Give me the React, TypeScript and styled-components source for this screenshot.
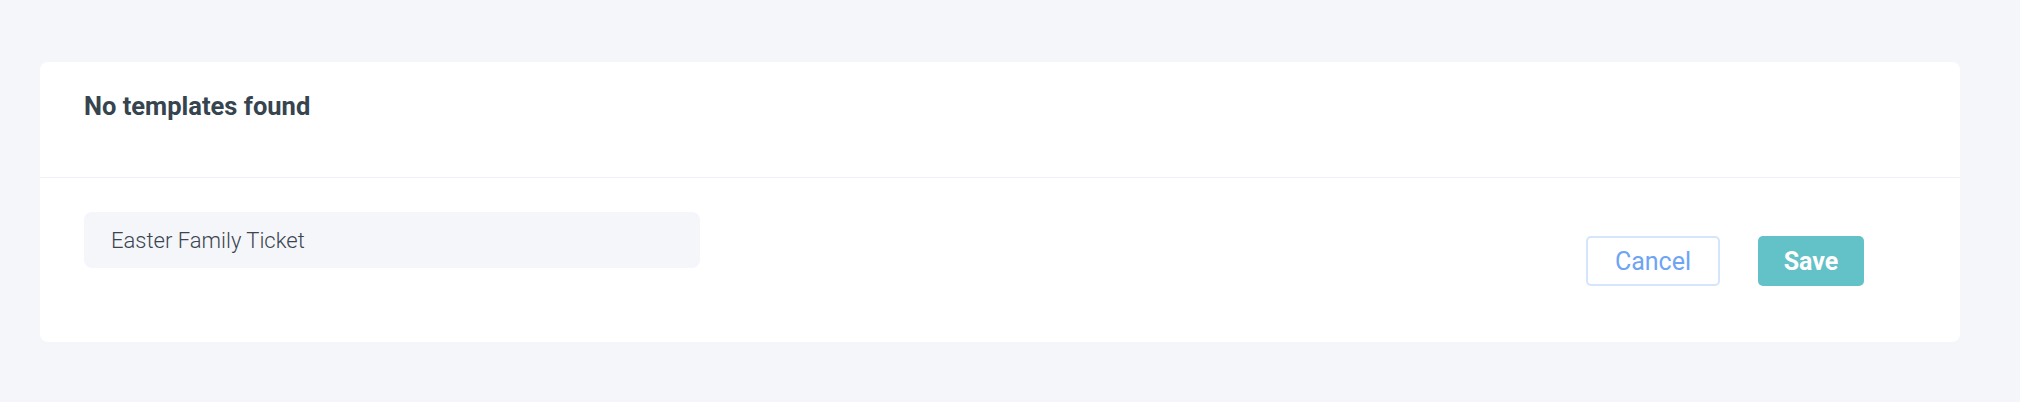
import React from "react";
import styled, { createGlobalStyle } from "styled-components";

const Global = createGlobalStyle`
  html, body { margin: 0; padding: 0; background: #f5f6fa; }
  body { font-family: Roboto, "Noto Sans", sans-serif; }
`;

const Page = styled.div`
  padding: 62px 60px 60px 40px;
`;

const Card = styled.div`
  background: #ffffff;
  border-radius: 8px;
  display: flex;
  flex-direction: column;
`;

const Header = styled.div`
  height: 116px;
  box-sizing: border-box;
  padding: 24px 44px 0;
  border-bottom: 1px solid #eff1f6;
`;

const Title = styled.h2`
  margin: 0;
  font-size: 25.5px;
  font-weight: 700;
  color: #36444f;
  line-height: 40px;
`;

const Body = styled.div`
  display: flex;
  align-items: flex-start;
  padding: 34px 96px 56px 44px;
`;

const NameField = styled.div`
  width: 616px;
  height: 56px;
  box-sizing: border-box;
  border-radius: 8px;
  background: #f5f6fa;
  display: flex;
  align-items: center;
  padding: 0 27px;
  font-size: 22px;
  font-weight: 300;
  color: #3b4550;
`;

const Actions = styled.div`
  margin-left: auto;
  margin-top: 24px;
  display: flex;
  gap: 38px;
`;

const Button = styled.button<{ $primary?: boolean }>`
  height: 50px;
  box-sizing: border-box;
  border-radius: 5px;
  font-family: Roboto, sans-serif;
  font-size: 25px;
  cursor: pointer;
  padding: 0;
  ${(p) =>
    p.$primary
      ? `
    width: 106px;
    background: #63c1c8;
    border: none;
    color: #ffffff;
    font-weight: 700;
  `
      : `
    width: 134px;
    background: #ffffff;
    border: 2px solid #d5e5fb;
    color: #6ea4f4;
    font-weight: 400;
  `}
`;

export default function App() {
  return (
    <Page>
      <Global />
      <Card>
        <Header>
          <Title>No templates found</Title>
        </Header>
        <Body>
          <NameField>Easter Family Ticket</NameField>
          <Actions>
            <Button>Cancel</Button>
            <Button $primary>Save</Button>
          </Actions>
        </Body>
      </Card>
    </Page>
  );
}
